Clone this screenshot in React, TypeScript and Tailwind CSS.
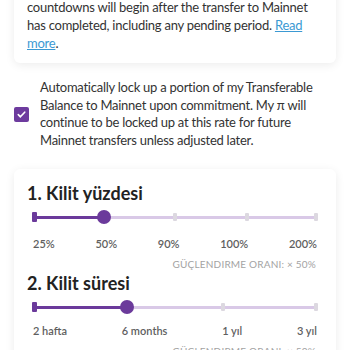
import React from "react";

const PURPLE = "bg-[#6b3a9b]";

function Slider({ stops, value }: { stops: number; value: number }) {
  const pct = (value / (stops - 1)) * 100;
  return (
    <div className="relative h-[14px]">
      <div className="absolute left-0 right-0 top-[6px] h-[3px] bg-[#d9c9e7]" />
      <div className={`absolute left-0 top-[6px] h-[3px] ${PURPLE}`} style={{ width: `${pct}%` }} />
      <div className={`absolute left-0 top-[2px] h-[10px] w-[5px] rounded-[1px] ${PURPLE}`} />
      {Array.from({ length: stops }).map((_, i) =>
        i > value ? (
          <div
            key={i}
            className="absolute top-[3px] h-[8px] w-[4px] -translate-x-1/2 rounded-[1px] bg-[#dcd8e0]"
            style={{ left: i === stops - 1 ? "calc(100% - 2px)" : `${(i / (stops - 1)) * 100}%` }}
          />
        ) : null
      )}
      <div
        className={`absolute top-0 h-[14px] w-[14px] -translate-x-1/2 rounded-full ${PURPLE}`}
        style={{ left: `${pct}%` }}
      />
    </div>
  );
}

function Labels({ items }: { items: string[] }) {
  return (
    <div className="flex justify-between px-[6px] text-[11px] leading-[16px] font-semibold text-[#5f5f5f]">
      {items.map((t) => (
        <span key={t}>{t}</span>
      ))}
    </div>
  );
}

function Boost() {
  return (
    <div className="mt-[5px] pr-[7px] text-right text-[10px] leading-[14px] tracking-[0.2px] text-[#a3a3a3]">
      GÜÇLENDIRME ORANI: × 50%
    </div>
  );
}

export default function App() {
  return (
    <div className="min-h-screen overflow-hidden bg-white px-[14px] font-['Lato',sans-serif] text-[#333]">
      <div className="-mt-[40px] rounded-md bg-white px-[13px] pb-[11px] pt-[38px] text-[13px] leading-[18px] tracking-[-0.25px] shadow-[0_2px_10px_rgba(0,0,0,0.08)]">
        countdowns will begin after the transfer to Mainnet has completed, including any pending period.{" "}
        <a href="#" className="text-[#3b99d3] underline">
          Read more
        </a>
        .
      </div>

      <label className="mt-[16px] flex items-center gap-[11px]">
        <span className="flex h-[15px] w-[15px] shrink-0 items-center justify-center rounded-[2px] bg-[#6d3b9e]">
          <svg viewBox="0 0 12 12" className="h-[11px] w-[11px]" fill="none" stroke="white" strokeWidth="1.8" strokeLinecap="round" strokeLinejoin="round">
            <path d="M2.5 6.2l2.3 2.3 4.7-5" />
          </svg>
        </span>
        <span className="pr-[6px] text-[13px] leading-[17.5px] tracking-[-0.25px]">
          Automatically lock up a portion of my Transferable Balance to Mainnet upon commitment. My π will continue
          to be locked up at this rate for future Mainnet transfers unless adjusted later.
        </span>
      </label>

      <div className="mt-[20px] rounded-md bg-white px-[13px] pb-4 pt-[12px] shadow-[0_2px_10px_rgba(0,0,0,0.08)]">
        <h2 className="text-[18px] leading-[24px] font-bold text-[#222]">1. Kilit yüzdesi</h2>
        <div className="mt-[5px] px-[5px]">
          <Slider stops={5} value={1} />
        </div>
        <div className="mt-[12px]">
          <Labels items={["25%", "50%", "90%", "100%", "200%"]} />
        </div>
        <Boost />

        <h2 className="text-[18px] leading-[24px] font-bold text-[#222]">2. Kilit süresi</h2>
        <div className="mt-[5px] px-[5px]">
          <Slider stops={4} value={1} />
        </div>
        <div className="mt-[9px]">
          <Labels items={["2 hafta", "6 months", "1 yıl", "3 yıl"]} />
        </div>
        <Boost />
      </div>
    </div>
  );
}
